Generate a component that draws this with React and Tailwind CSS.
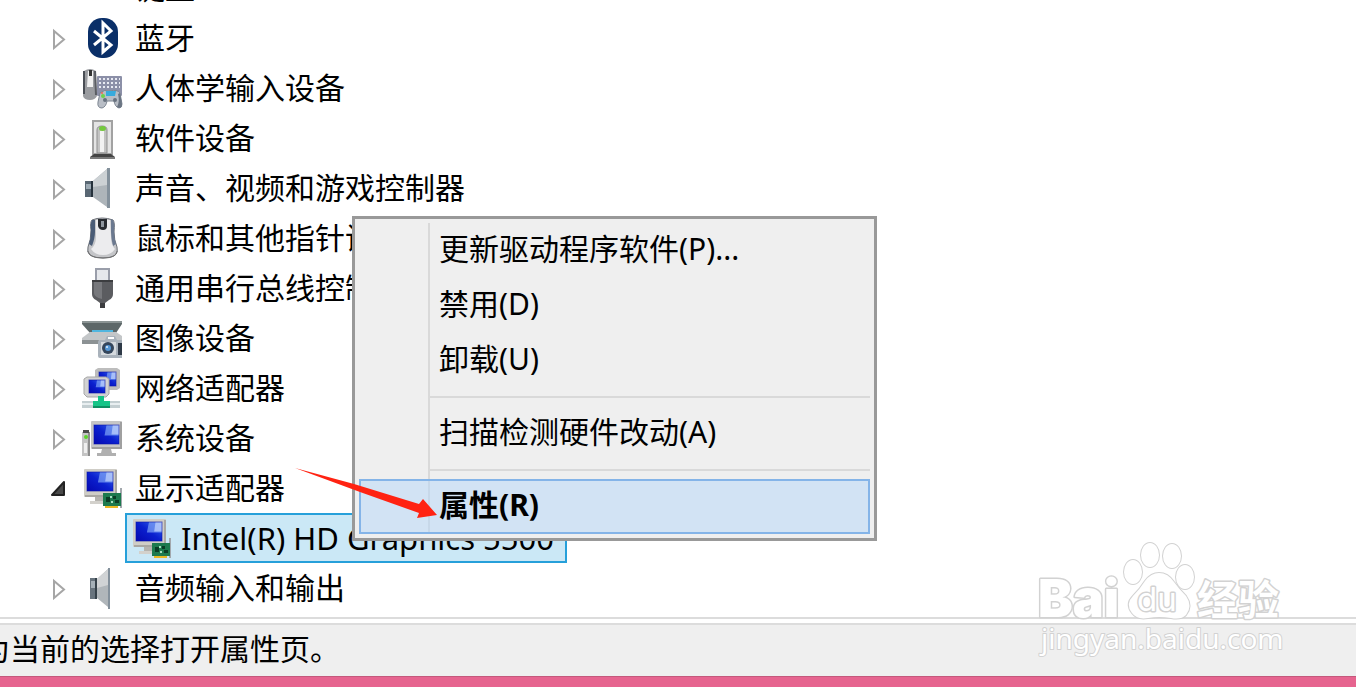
import React, { useState } from 'react';

const Screen = ({ x, y, w, h }) => (
  <g>
    <rect x={x} y={y} width={w} height={h} fill="url(#screen-fill)" />
    <path d={`M${x + w * 0.5} ${y}H${x + w}V${y + h * 0.55}H${x + w * 0.42}Z`} fill="#7fa4f5" fillOpacity="0.7" />
    <path d={`M${x + w * 0.75} ${y}H${x + w}V${y + h * 0.5}H${x + w * 0.7}Z`} fill="#d3e2ff" fillOpacity="0.6" />
    <rect x={x} y={y} width={w} height={h} fill="none" stroke="#0713a8" strokeOpacity="0.6" />
  </g>
);

const DisplayArt = () => (
  <g>
    <rect x="2" y="1" width="33" height="28" rx="1" fill="#cfcdc6" />
    <path d="M33 2h2v27H3v-2h30z" fill="#a9a7a2" />
    <Screen x={5} y={4} w={26} h={19} />
    <path d="M13 29h9v4h-9z" fill="#b5b3ae" />
    <path d="M8 33h15v3H8z" fill="#d3d1cc" />
    <path d="M38 20h2v20h-2z" fill="#a3a8ad" />
    <rect x="21" y="25" width="18" height="13" fill="#1d7a4e" />
    <path d="M24 29h4v5h-4zM31 28h3v3h-3zM33 32h4v3h-4z" fill="#0a3d26" />
    <path d="M28 28h2v2h-2zM29 33h2v2h-2z" fill="#a6e0bf" />
    <path d="M23 38h13v2H23z" fill="#e9b722" />
  </g>
);

const icons = {
  keyboard: (
    <g>
      <rect x="1" y="12" width="38" height="16" rx="2" fill="#8c90a8" />
      <path d="M4 16h32M4 20h32M4 24h32" stroke="#e8eaf2" strokeWidth="2" strokeDasharray="2 2" />
    </g>
  ),
  bluetooth: (
    <g>
      <rect x="6" y="0" width="30" height="40" rx="14" fill="#0a2f68" />
      <path d="M12 13L29 27L21 34V5L29 13L12 27" fill="none" stroke="#fff" strokeWidth="3" />
    </g>
  ),
  hid: (
    <g>
      <rect x="15" y="8" width="25" height="20" rx="1" fill="#8c90a8" />
      <path d="M17 11h21M17 15h21M17 19h21" stroke="#e8eaf2" strokeWidth="2" strokeDasharray="2 2" />
      <path d="M2 3Q8-1 14 3L15 28Q13 32 8 32Q2 32 1 28Z" fill="#9a9ca0" />
      <path d="M2 3v23" stroke="#4a4e55" strokeWidth="2" />
      <path d="M13 3l1 24" stroke="#5a5d63" strokeWidth="2" />
      <path d="M6 3h5v16H5z" fill="#f1f1f1" />
      <path d="M7 2h3v6H7z" fill="#333" />
      <path d="M18 25Q22 21 28 23Q35 21 38 25L40 36Q40 40 37 40Q33 39 32 33H25Q24 39 20 40Q15 40 16 34Z" fill="#b9bec6" stroke="#7d8692" />
      <path d="M38 25l2 11q0 4-3 4l-2-1q3-5 1-13z" fill="#6b7583" />
      <path d="M24 23h10l-1 5h-9z" fill="#38abdd" />
      <circle cx="21" cy="28" r="2" fill="#6fd34a" />
      <circle cx="23" cy="32" r="2" fill="#68727f" />
      <circle cx="33" cy="32" r="2" fill="#68727f" />
      <circle cx="20" cy="25" r="1" fill="#ee6b52" />
    </g>
  ),
  software: (
    <g>
      <rect x="11" y="3" width="19" height="33" fill="#e4e4e4" stroke="#a2a2a2" strokeWidth="2" />
      <path d="M15 35V12q0-4 5-4t5 4v23z" fill="#c3c3c3" stroke="#8f8f8f" />
      <path d="M18 13h4v21h-4z" fill="#f2f2f2" />
      <ellipse cx="20.500" cy="10.500" rx="3.500" ry="2.500" fill="#74c93c" />
      <path d="M12 36h17l4 3H8z" fill="#444" />
      <path d="M8 39h25v2H8z" fill="#7a7a7a" />
    </g>
  ),
  sound: (
    <g>
      <path d="M3 13h8v16H3z" fill="#596773" />
      <path d="M4 16h6v5H4z" fill="#9daab4" />
      <path d="M9 13h2v16H9z" fill="#26323c" />
      <path d="M11 13L25 1v38L11 29z" fill="#aeb5ba" />
      <path d="M11 13L25 1v16L11 19z" fill="#ccd1d4" />
      <path d="M25 0h3v40h-3z" fill="#84919c" />
    </g>
  ),
  audio: (
    <g>
      <path d="M8 10h7v21H8z" fill="#68747e" />
      <path d="M9 13h4v7H9z" fill="#a5b0b8" />
      <path d="M13 10h2v21h-2z" fill="#35414a" />
      <path d="M15 11L26 1v38L15 30z" fill="#b0b6ba" />
      <path d="M15 11L26 1v16l-11 3z" fill="#d0d3d5" />
      <path d="M26 0h2v41h-2z" fill="#84919c" />
    </g>
  ),
  mouse: (
    <g>
      <path d="M10 2Q20-2 31 2Q33 4 32 14Q32 22 35 29Q38 40 21 40Q3 40 6 29Q9 22 9 12Q8 4 10 2Z" fill="#c4c5c8" stroke="#6b6f76" />
      <path d="M10 2q-2 4-1 10q0 8-2 14l3 2q3-8 3-14V2z" fill="#4a5c76" />
      <path d="M31 2q2 4 1 10q0 8 2 14l-3 2q-2-8-2-14V1z" fill="#6b7990" />
      <path d="M14 2h4v9h6V2h4l1 17q0 8 4 12q-4 6-12 6T9 31q5-4 5-12z" fill="#ececee" />
      <path d="M16 1h9v7q0 4-4 4t-5-4z" fill="#272a2f" />
      <path d="M19 3h3v6h-3z" fill="#8f969e" />
      <path d="M6 33q1 7 15 7t14-7" fill="none" stroke="#737373" />
    </g>
  ),
  usb: (
    <g>
      <rect x="14" y="1" width="13" height="12" fill="#e6e8ec" stroke="#9a9eaa" strokeWidth="2" />
      <path d="M10 12h21v14q0 4-4 6l-4 3v5h-5v-5l-4-3q-4-2-4-6z" fill="#5b5c60" />
      <path d="M12 14h8v17q-8-2-8-6z" fill="#77787c" />
      <path d="M10 12h21v2H10zM18 35h5v5h-5z" fill="#3c3d40" />
    </g>
  ),
  imaging: (
    <g>
      <path d="M0 3h40v3l-6 9H8L0 6z" fill="#5d6768" />
      <path d="M0 3h40v2H0z" fill="#8b9494" />
      <path d="M8 14h26l6 4v7H0v-5z" fill="#c3c6c8" />
      <path d="M10 12h21v2H10z" fill="#51b6df" />
      <path d="M0 22h17v4H0z" fill="#8c9294" />
      <path d="M18 22h5l2-4h8l2 4h5v18H18q-2 0-2-2V24q0-2 2-2z" fill="#a9b2bb" />
      <path d="M19 24h15v13H19z" fill="#d5dade" />
      <path d="M26 19h6v2h-6z" fill="#fff" />
      <path d="M36 25h4v12h-4z" fill="#2e3947" />
      <circle cx="26" cy="30" r="6" fill="#34465c" />
      <circle cx="26" cy="30" r="3" fill="#5597d6" />
      <circle cx="25" cy="29" r="1" fill="#e3f2ff" />
    </g>
  ),
  network: (
    <g>
      <path d="M16 0h19l3 2v18l-3 2H16l-3-2V2z" fill="#bdbdbd" />
      <Screen x={17} y={4} w={17} h={14} />
      <path d="M5 9h19l3 2v15l-3 3H5l-3-3V11z" fill="#d2d2d2" stroke="#a7a7a7" />
      <Screen x={7} y={12} w={16} h={13} />
      <path d="M0 33h38v7H0z" fill="#c3ced1" />
      <path d="M0 35h38v2H0z" fill="#e8eef0" />
      <path d="M16 28h6v5h6v7H11v-7h5z" fill="#15c487" />
      <path d="M11 38h17v2H11z" fill="#0c8f62" />
    </g>
  ),
  system: (
    <g>
      <rect x="9" y="3" width="31" height="28" rx="1" fill="#c6c6c6" />
      <path d="M38 4h2v27H10v-2h28z" fill="#a0a0a0" />
      <Screen x={12} y={7} w={25} h={19} />
      <path d="M20 31h9l1 4h4v3H15v-3h4z" fill="#b0b0b0" />
      <rect x="0" y="14" width="8" height="24" fill="#c4c4c4" />
      <path d="M6 14h2v24H6z" fill="#8d8d8d" />
      <path d="M1 12h6v3H1z" fill="#4b4b4b" />
      <circle cx="4" cy="19" r="2" fill="#5bd52a" />
      <path d="M2 25h3v10H2z" fill="#efefef" />
    </g>
  ),
  display: <DisplayArt />,
};

const devices = [
  { name: '键盘', icon: 'keyboard' },
  { name: '蓝牙', icon: 'bluetooth' },
  { name: '人体学输入设备', icon: 'hid' },
  { name: '软件设备', icon: 'software' },
  { name: '声音、视频和游戏控制器', icon: 'sound' },
  { name: '鼠标和其他指针设备', icon: 'mouse' },
  { name: '通用串行总线控制器', icon: 'usb' },
  { name: '图像设备', icon: 'imaging' },
  { name: '网络适配器', icon: 'network' },
  { name: '系统设备', icon: 'system' },
  { name: '显示适配器', icon: 'display', children: ['Intel(R) HD Graphics 5500'] },
  { name: '音频输入和输出', icon: 'audio' },
];

const menuGroups = [
  ['更新驱动程序软件(P)...', '禁用(D)', '卸载(U)'],
  ['扫描检测硬件改动(A)'],
  ['属性(R)'],
];

function DeviceIcon({ name }) {
  return (
    <svg viewBox="0 0 40 40" className="w-10 h-10 shrink-0 overflow-visible" aria-hidden="true">
      <defs>
        <linearGradient id="screen-fill" x1="0" y1="1" x2="1" y2="0">
          <stop offset="0" stopColor="#0508b0" />
          <stop offset="0.5" stopColor="#0b20cf" />
          <stop offset="1" stopColor="#3a6cf0" />
        </linearGradient>
      </defs>
      {icons[name]}
    </svg>
  );
}

function DeviceNode({ device, open, onToggle }) {
  return (
    <li>
      <div className="flex items-center h-[50px] pl-[50px]">
        <button
          type="button"
          onClick={onToggle}
          aria-label={device.name}
          aria-expanded={open}
          className="w-6 h-6 mr-2 shrink-0"
        >
          <svg viewBox="0 0 24 24" className="w-6 h-6">
            {open ? (
              <path d="M14 6v13H2z" fill="#4a4a4a" stroke="#222" strokeWidth="2" strokeLinejoin="round" />
            ) : (
              <path d="M4 5v17l10-8.500z" fill="#fff" stroke="#a6a6a6" strokeWidth="2" />
            )}
          </svg>
        </button>
        <DeviceIcon name={device.icon} />
        <span className="ml-[13px]">{device.name}</span>
      </div>
      {open && device.children && (
        <ul className="pl-[125px]">
          {device.children.map((child) => (
            <li
              key={child}
              className="flex items-center w-[442px] h-[50px] pl-1 bg-[#cbe8f6] border-2 border-[#26a0da] text-[31px]"
            >
              <DeviceIcon name={device.icon} />
              <span className="ml-2.5">{child}</span>
            </li>
          ))}
        </ul>
      )}
    </li>
  );
}

function ContextMenu() {
  return (
    <div
      role="menu"
      className="absolute left-[352px] top-[216px] w-[525px] p-1 bg-[#efefef] border-[3px] border-[#999]"
    >
      <div className="absolute left-[73px] top-1 bottom-1 w-0.5 bg-[#d9d9d9]" />
      {menuGroups.map((group, i) => (
        <div key={group[0]} className="relative">
          {i > 0 && (
            <div className="flex items-center h-[18px] pl-[70px]">
              <hr className="flex-1 border-0 h-0.5 bg-[#d9d9d9]" />
            </div>
          )}
          {group.map((label) => (
            <button
              key={label}
              type="button"
              role="menuitem"
              className={`block w-full h-[55px] pl-[78px] pb-[3px] text-left border-2 ${
                label === '属性(R)'
                  ? 'bg-[#b5d7f9]/50 border-[#84b4e8] font-bold'
                  : 'border-transparent'
              }`}
            >
              {label}
            </button>
          ))}
        </div>
      ))}
    </div>
  );
}

function Watermark() {
  return (
    <svg
      viewBox="0 0 260 125"
      className="absolute right-[66px] bottom-[22px] w-[260px] h-[125px]"
      fill="#fff"
      stroke="#d2d2d2"
      strokeWidth="2"
      strokeLinejoin="round"
      paintOrder="stroke"
      fontFamily="'Noto Sans', 'Noto Sans CJK SC', sans-serif"
    >
      <text x="8" y="77" fontSize="52" fontWeight="900" strokeWidth="3" fontFamily="Inter, sans-serif">Bai</text>
      <g>
        <ellipse cx="103" cy="32" rx="9" ry="12" />
        <ellipse cx="120" cy="15" rx="9" ry="12" />
        <ellipse cx="142" cy="16" rx="9" ry="12" />
        <ellipse cx="155" cy="37" rx="9" ry="12" />
        <path d="M129 33Q138 33 144 42Q149 49 156 56Q163 66 156 75Q151 80 141 78Q129 76 118 78Q107 80 102 73Q95 64 103 56Q110 49 115 41Q121 33 129 33Z" />
      </g>
      <text x="107" y="71" fontSize="33" strokeWidth="3" fontFamily="Inter, sans-serif">du</text>
      <text x="167" y="75" fontSize="41" fontWeight="700" strokeWidth="3">经验</text>
      <text x="11" y="109" fontSize="28">jingyan.baidu.com</text>
    </svg>
  );
}

function App() {
  const [openNode, setOpenNode] = useState('显示适配器');

  return (
    <div className="relative flex flex-col h-screen overflow-hidden bg-white text-black text-[30px] leading-[40px] whitespace-nowrap font-['Noto_Sans','Noto_Sans_CJK_SC',sans-serif]">
      <main className="flex-1 min-h-0 overflow-hidden">
        <ul className="-mt-[37px]">
          {devices.map((d) => (
            <DeviceNode
              key={d.name}
              device={d}
              open={openNode === d.name}
              onToggle={() => setOpenNode(openNode === d.name ? null : d.name)}
            />
          ))}
        </ul>
      </main>

      {/* status bar, its text runs off the left side */}
      <footer className="shrink-0">
        <div className="h-2 border-y-2 border-[#dcdcdc] bg-white" />
        <div className="flex items-center h-[51px] pb-1 bg-[#efefef]">
          <p className="-ml-5">为当前的选择打开属性页。</p>
        </div>
        <div className="h-[11px] bg-[#e6648f] border-t border-[#c4587c]" />
      </footer>

      <ContextMenu />

      {/* pointer to the properties entry */}
      <svg viewBox="0 0 144 52" className="absolute left-[294px] top-[467px] w-36 h-[52px] pointer-events-none">
        <path d="M1 1L60 17L125 37L129 32L143 48L123 51L125 46L66 25Z" fill="#ff2312" />
      </svg>

      <Watermark />
    </div>
  );
}

export default App;
